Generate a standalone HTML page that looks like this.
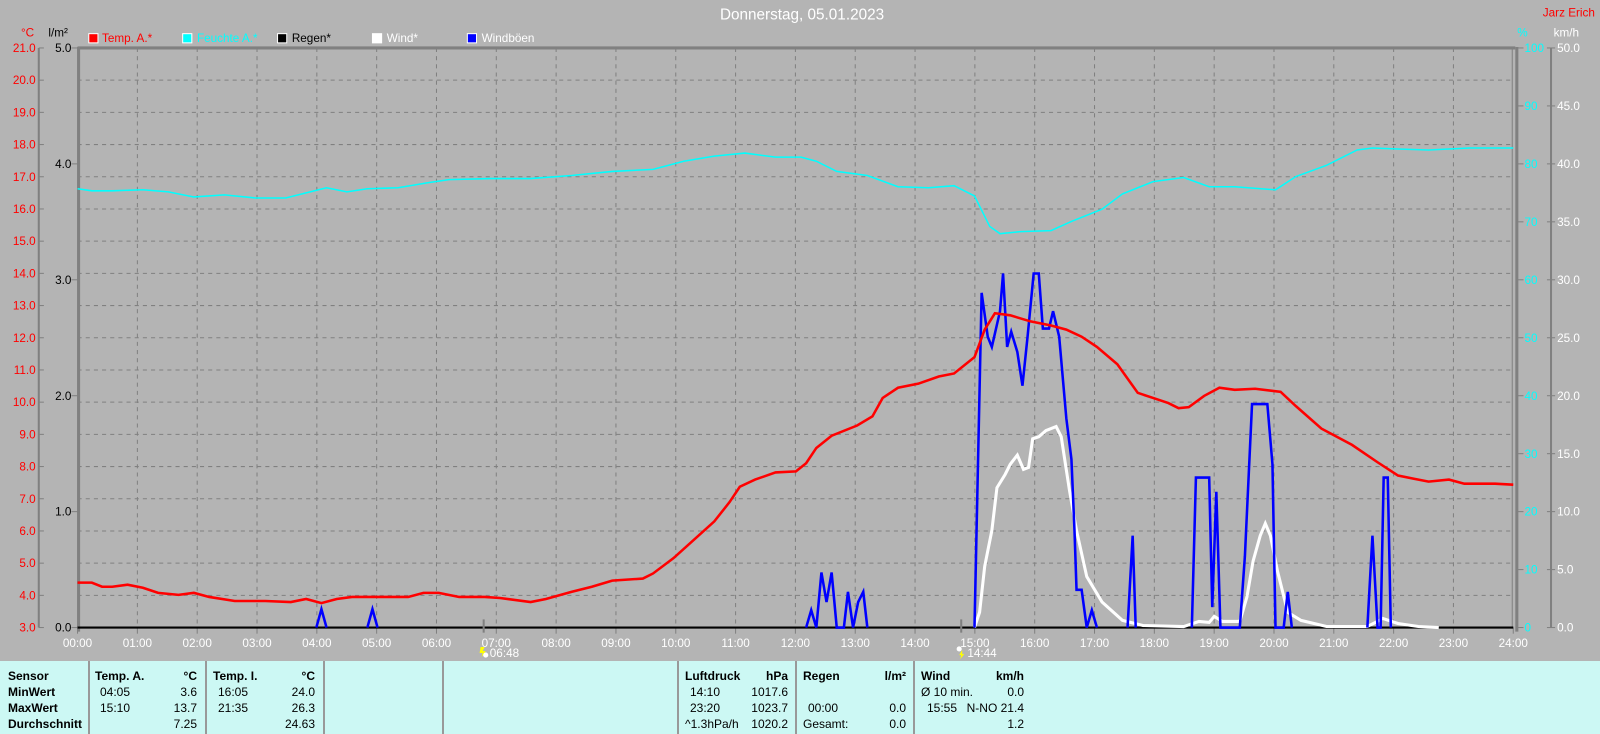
<!DOCTYPE html>
<html><head><meta charset="utf-8"><style>
body{margin:0;width:1600px;height:734px;overflow:hidden;background:#b4b4b4;font-family:"Liberation Sans",sans-serif;position:relative}
svg{position:absolute;left:0;top:0}
#panel{position:absolute;left:0;top:661px;width:1600px;height:73px;background:#ccf8f4;font-size:12px;color:#000}
.v{position:absolute;top:0;width:2px;height:73px;background:#999}
.t{position:absolute;line-height:16px;white-space:nowrap}
.b{font-weight:bold}
.r{text-align:right}
</style></head><body>
<svg width="1600" height="734" viewBox="0 0 1568 719.32" font-family="Liberation Sans, sans-serif" font-size="11.5">
<g stroke="#808080" stroke-width="1" stroke-dasharray="4,4" id="grid"></g>
<text x="786" y="19" fill="#fff" font-size="15" text-anchor="middle">Donnerstag, 05.01.2023</text>
<text x="1563" y="16" fill="#f00" font-size="11.5" text-anchor="end">Jarz Erich</text>
<text x="27" y="36" fill="#f00" text-anchor="middle">°C</text>
<text x="57" y="36" fill="#000" text-anchor="middle">l/m²</text>
<text x="1492" y="36" fill="#0ff" text-anchor="middle">%</text>
<text x="1535" y="36" fill="#fff" text-anchor="middle">km/h</text>
<g stroke="#fff" stroke-width="1">
<rect x="87" y="33" width="9" height="9" fill="#f00"/>
<rect x="179" y="33" width="9" height="9" fill="#0ff"/>
<rect x="272" y="33" width="9" height="9" fill="#000"/>
<rect x="365" y="33" width="9" height="9" fill="#fff"/>
<rect x="458" y="33" width="9" height="9" fill="#00f"/>
</g>
<text x="100" y="41" fill="#f00">Temp. A.*</text>
<text x="193" y="41" fill="#0ff">Feuchte A.*</text>
<text x="286" y="41" fill="#000">Regen*</text>
<text x="379" y="41" fill="#fff">Wind*</text>
<text x="472" y="41" fill="#fff">Windböen</text>
<line x1="76" y1="47" x2="1485" y2="47" stroke="#808080" stroke-width="3"/>
<line x1="77" y1="46" x2="77" y2="619" stroke="#808080" stroke-width="3"/>
<line x1="1482" y1="47" x2="1482" y2="615" stroke="#808080" stroke-width="1"/>
<line x1="1486.5" y1="46" x2="1486.5" y2="619" stroke="#808080" stroke-width="3"/>
<line x1="38" y1="47" x2="38" y2="615" stroke="#808080" stroke-width="2"/>
<line x1="1520" y1="47" x2="1520" y2="615" stroke="#808080" stroke-width="2"/>
<g id="axes"></g>
<line x1="76" y1="615" x2="1483" y2="615" stroke="#000" stroke-width="2"/>
<polyline fill="none" stroke="#0ff" stroke-width="1.5" points="76,185 90,187 110,187 140,186 165,188 190,193 220,191 250,194 280,194 300,189 320,184 340,188 360,185 390,184 420,179 440,176 480,175 520,175 560,172 600,168 640,166 670,158 700,153 730,150 760,154 785,154 800,158 820,168 850,172 880,183 910,184 935,182 955,192 970,222 980,229 1000,227 1030,226 1050,217 1080,205 1100,190 1130,178 1160,174 1185,183 1210,183 1250,186 1270,173 1300,162 1330,147 1345,145 1370,146 1400,147 1440,145 1483,145"/>
<polyline fill="none" stroke="#fff" stroke-width="3" points="955,615 960,600 965,555 972,520 977,478 985,465 990,455 997,446 1003,460 1008,458 1012,430 1018,428 1025,422 1035,418 1040,428 1048,480 1055,520 1065,565 1080,590 1100,608 1120,613 1160,614 1175,609 1185,610 1190,604 1198,609 1215,609 1222,585 1228,550 1235,525 1240,513 1245,525 1252,560 1262,600 1275,608 1300,614 1340,614 1350,609 1355,606 1370,611 1390,614 1410,615"/>
<g fill="none" stroke="#00f" stroke-width="2.5">
<polyline points="310,615 315,597 320,615"/>
<polyline points="360,615 365,597 370,615"/>
<polyline points="790,615 795,598 800,615 805,561 810,590 815,561 820,615 827,615 831,580 836,615 841,590 846,580 850,615"/>
<polyline points="955,615 962,287 968,330 972,340 980,305 983,268 987,340 991,325 997,345 1002,378 1007,330 1013,268 1018,268 1022,322 1028,322 1032,305 1038,330 1045,410 1050,450 1053,520 1055,578 1060,578 1065,615 1070,598 1075,615"/>
<polyline points="1105,615 1110,525 1113,615"/>
<polyline points="1168,615 1172,468 1185,468 1188,595 1192,482 1196,615 1215,615 1220,545 1227,396 1242,396 1247,455 1250,615 1258,615 1262,580 1266,615"/>
<polyline points="1340,615 1345,525 1350,615 1353,615 1356,468 1360,468 1363,615"/>
</g>
<polyline fill="none" stroke="#f00" stroke-width="2.5" points="76,571 90,571 100,575 110,575 125,573 140,576 155,581 175,583 190,581 205,585 230,589 260,589 285,590 300,587 315,591 330,587 345,585 370,585 400,585 415,581 430,581 450,585 475,585 490,586 520,590 535,587 560,580 580,575 600,569 630,567 640,562 660,547 680,529 700,511 715,492 725,477 740,470 760,463 780,462 790,454 800,439 815,427 840,417 855,408 865,390 880,380 900,376 920,369 935,366 955,350 965,323 975,307 990,309 1010,315 1030,319 1045,323 1060,330 1075,340 1095,357 1115,385 1130,390 1145,395 1155,400 1165,399 1180,388 1195,380 1210,382 1230,381 1255,384 1270,398 1295,420 1325,436 1350,453 1370,466 1385,469 1400,472 1420,470 1435,474 1465,474 1483,475"/>
<line x1="474" y1="607" x2="474" y2="620" stroke="#808080" stroke-width="2"/>
<line x1="942" y1="607" x2="942" y2="620" stroke="#808080" stroke-width="2"/>
<path d="M471,634 l4,0 l-2,4 l3,0 l-4,6 l1,-4 l-3,0z" fill="#ff0"/>
<circle cx="476" cy="642" r="2.5" fill="#fff"/>
<text x="480" y="644" fill="#fff">06:48</text>
<circle cx="940" cy="636" r="2.5" fill="#fff"/>
<path d="M943,637 l-3,5 l2,0 l-1,4 l4,-5 l-2,0z" fill="#ff0"/>
<text x="948" y="644" fill="#fff">14:44</text>
</svg>
<div id="panel">
<div class="v" style="left:88px"></div><div class="v" style="left:205px"></div><div class="v" style="left:323px"></div><div class="v" style="left:442px"></div><div class="v" style="left:677px"></div><div class="v" style="left:795px"></div><div class="v" style="left:913px"></div>
<div class="t b" style="left:8px;top:7px">Sensor<br>MinWert<br>MaxWert<br>Durchschnitt</div>
<div class="t b" style="left:95px;top:7px">Temp. A.</div>
<div class="t" style="left:100px;top:23px">04:05<br>15:10</div>
<div class="t r" style="right:1403px;top:7px"><b>°C</b><br>3.6<br>13.7<br>7.25</div>
<div class="t b" style="left:213px;top:7px">Temp. I.</div>
<div class="t" style="left:218px;top:23px">16:05<br>21:35</div>
<div class="t r" style="right:1285px;top:7px"><b>°C</b><br>24.0<br>26.3<br>24.63</div>
<div class="t b" style="left:685px;top:7px">Luftdruck</div>
<div class="t" style="left:690px;top:23px">14:10<br>23:20</div>
<div class="t" style="left:685px;top:55px">^1.3hPa/h</div>
<div class="t r" style="right:812px;top:7px"><b>hPa</b><br>1017.6<br>1023.7<br>1020.2</div>
<div class="t b" style="left:803px;top:7px">Regen</div>
<div class="t" style="left:808px;top:39px">00:00</div>
<div class="t" style="left:803px;top:55px">Gesamt:</div>
<div class="t r" style="right:694px;top:7px"><b>l/m²</b><br>&nbsp;<br>0.0<br>0.0</div>
<div class="t b" style="left:921px;top:7px">Wind</div>
<div class="t" style="left:921px;top:23px">Ø 10 min.</div>
<div class="t" style="left:927px;top:39px">15:55</div>
<div class="t r" style="right:576px;top:7px"><b>km/h</b><br>0.0<br>N-NO 21.4<br>1.2</div>
</div>
<script>
var ns="http://www.w3.org/2000/svg",g=document.getElementById("grid"),a=document.getElementById("axes");
function el(p,t,o,txt){var e=document.createElementNS(ns,t);for(var k in o)e.setAttribute(k,o[k]);if(txt!==undefined)e.textContent=txt;p.appendChild(e);return e;}
var H=(1483-76)/24;
for(var k=0;k<=24;k++){var x=76+k*H;if(k>0&&k<24)el(g,"line",{x1:x,y1:47,x2:x,y2:615});
el(a,"line",{x1:x,y1:615,x2:x,y2:621,stroke:"#808080"});
el(a,"text",{x:x,y:634,fill:"#fff","text-anchor":"middle"},(k<10?"0":"")+k+":00");}
for(var i=0;i<=18;i++){var y=47+i*(568/18);if(i>0&&i<18)el(g,"line",{x1:76,y1:y,x2:1483,y2:y});
el(a,"line",{x1:38,y1:y,x2:43,y2:y,stroke:"#808080"});
el(a,"text",{x:35,y:y+4,fill:"#f00","text-anchor":"end"},(21-i).toFixed(1));}
for(var i=0;i<=5;i++){var y=615-i*113.6;el(a,"line",{x1:70,y1:y,x2:76,y2:y,stroke:"#808080"});
el(a,"text",{x:70,y:y+4,fill:"#000","text-anchor":"end"},i.toFixed(1));}
for(var i=0;i<=10;i++){var y=615-i*56.8;el(a,"line",{x1:1487,y1:y,x2:1493,y2:y,stroke:"#808080"});
el(a,"text",{x:1494,y:y+4,fill:"#0ff"},String(i*10));
el(a,"line",{x1:1516,y1:y,x2:1524,y2:y,stroke:"#808080"});
el(a,"text",{x:1526,y:y+4,fill:"#fff"},(i*5).toFixed(1));}
</script>
</body></html>
